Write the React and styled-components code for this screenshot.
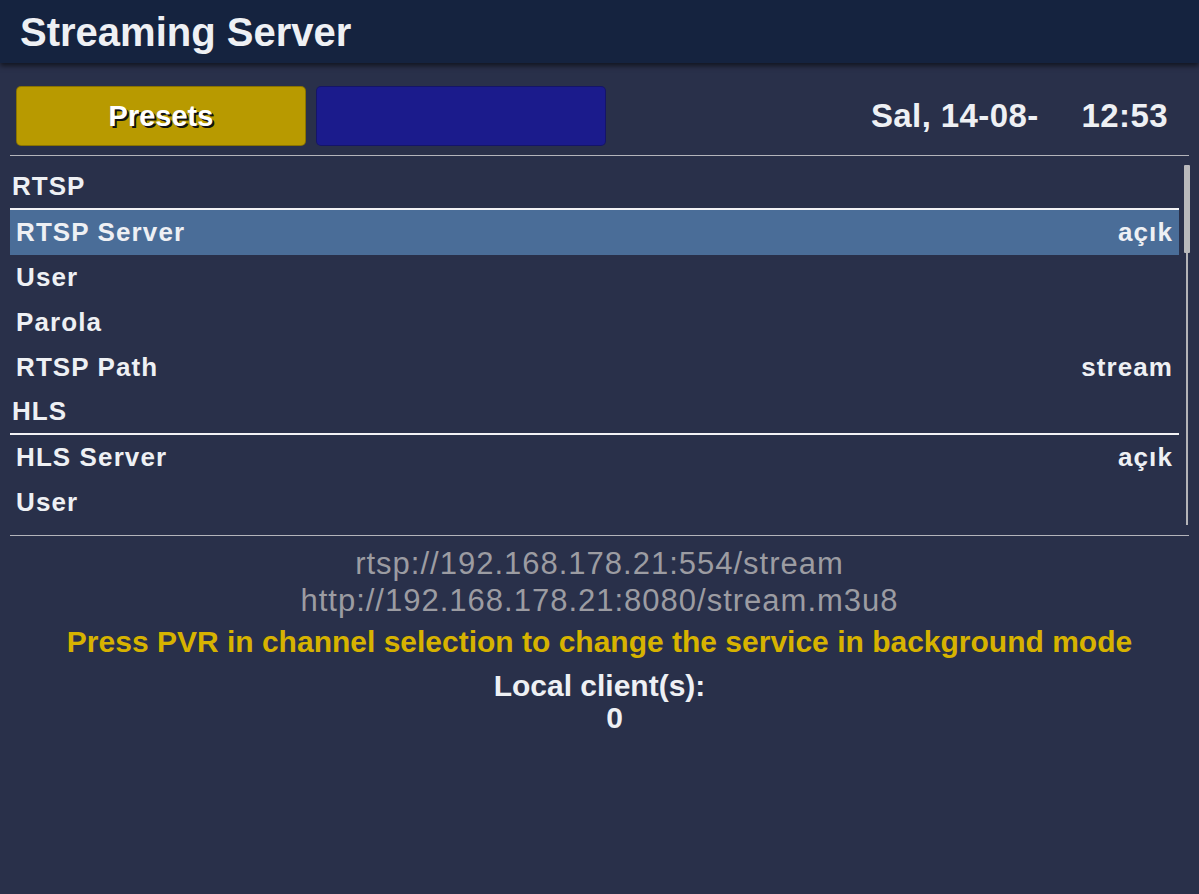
import React from 'react'
import styled, { createGlobalStyle } from 'styled-components'

const GlobalStyle = createGlobalStyle`
  html, body {
    margin: 0;
    background: #29304a;
  }
  body {
    font-family: "Liberation Sans", Arial, sans-serif;
    color: #eef0f4;
  }
`

const items = [
  { type: 'section', label: 'RTSP' },
  { label: 'RTSP Server', value: 'açık', selected: true },
  { label: 'User' },
  { label: 'Parola' },
  { label: 'RTSP Path', value: 'stream' },
  { type: 'section', label: 'HLS' },
  { label: 'HLS Server', value: 'açık' },
  { label: 'User' },
]

const App = () => {
  return (
    <Screen>
      <GlobalStyle />
      <TitleBar>
        <Title>Streaming Server</Title>
      </TitleBar>

      {/* color keys + clock */}
      <Toolbar>
        <KeyButton $bg="#b89a00">Presets</KeyButton>
        <KeyButton $bg="#1b1b8c" />
        <Clock>
          <span>Sal, 14-08-</span>
          <span>12:53</span>
        </Clock>
      </Toolbar>

      <Divider />

      <ListArea>
        <List>
          {items.map((item, i) =>
            item.type === 'section' ? (
              <SectionHeader key={i}>{item.label}</SectionHeader>
            ) : (
              <Row key={i} $selected={item.selected}>
                <span>{item.label}</span>
                {item.value && <span>{item.value}</span>}
              </Row>
            )
          )}
        </List>
        <ScrollBar>
          <Thumb />
          <Track />
        </ScrollBar>
      </ListArea>

      <Divider $top={10} />

      <Info>
        <Url>rtsp://192.168.178.21:554/stream</Url>
        <Url>http://192.168.178.21:8080/stream.m3u8</Url>
        <Hint>Press PVR in channel selection to change the service in background mode</Hint>
        <Clients>Local client(s):</Clients>
        <Count>0</Count>
      </Info>
    </Screen>
  )
}

export default App
//----------------------------------------------------------------

const Screen = styled.div`
  min-height: 894px;
  background: #29304a;
  overflow: hidden;
`

const TitleBar = styled.header`
  height: 63px;
  background: #15233f;
  display: flex;
  align-items: center;
  padding-left: 20px;
  box-shadow: 0 3px 5px rgba(0, 0, 0, 0.55);
  position: relative;
`

const Title = styled.h1`
  margin: 0;
  font-size: 40px;
  font-weight: bold;
  color: #eef0f4;
  line-height: 1;
`

const Toolbar = styled.div`
  display: flex;
  align-items: center;
  gap: 10px;
  margin-top: 23px;
  padding: 0 31px 0 16px;
`

const KeyButton = styled.div`
  width: 290px;
  height: 60px;
  box-sizing: border-box;
  border-radius: 5px;
  border: 1px solid rgba(0, 0, 0, 0.25);
  background: ${(p) => p.$bg};
  display: flex;
  align-items: center;
  justify-content: center;
  font-size: 29px;
  font-weight: bold;
  color: #ffffff;
  text-shadow: 2px 2px 0 #111111;
`

const Clock = styled.div`
  margin-left: auto;
  display: flex;
  gap: 43px;
  font-size: 33px;
  font-weight: bold;
  letter-spacing: 0.4px;
  color: #eef0f4;
`

const Divider = styled.div`
  height: 1px;
  margin: ${(p) => p.$top ?? 9}px 10px 0 10px;
  background: #b3b4bb;
`

const ListArea = styled.div`
  display: flex;
  padding: 9px 9px 0 10px;
`

const List = styled.div`
  flex: 1;
  display: flex;
  flex-direction: column;
`

const SectionHeader = styled.div`
  height: 45px;
  box-sizing: border-box;
  display: flex;
  align-items: center;
  padding-left: 2px;
  border-bottom: 2px solid #f2f2f5;
  font-size: 26px;
  font-weight: bold;
  letter-spacing: 1px;
`

const Row = styled.div`
  height: 45px;
  display: flex;
  align-items: center;
  justify-content: space-between;
  padding: 0 6px;
  font-size: 26px;
  font-weight: bold;
  letter-spacing: 1.1px;
  background: ${(p) => (p.$selected ? '#4a6d98' : 'transparent')};
`

const ScrollBar = styled.div`
  width: 6px;
  margin-left: 5px;
  display: flex;
  flex-direction: column;
  align-items: center;
`

const Thumb = styled.div`
  width: 6px;
  height: 88px;
  background: #b9b9bc;
  border-radius: 1px;
`

const Track = styled.div`
  width: 2px;
  flex: 1;
  background: #b4b4b8;
`

const Info = styled.div`
  display: flex;
  flex-direction: column;
  align-items: center;
  padding-top: 9px;
  text-align: center;
`

const Url = styled.div`
  font-size: 31px;
  letter-spacing: 1px;
  line-height: 37px;
  color: #9c9ca2;
`

const Hint = styled.div`
  margin-top: 4px;
  font-size: 30px;
  font-weight: bold;
  line-height: 38px;
  color: #d7b300;
`

const Clients = styled.div`
  margin-top: 9px;
  font-size: 30px;
  font-weight: bold;
  line-height: 32px;
`

const Count = styled.div`
  padding-left: 30px;
  font-size: 30px;
  font-weight: bold;
  line-height: 32px;
`
